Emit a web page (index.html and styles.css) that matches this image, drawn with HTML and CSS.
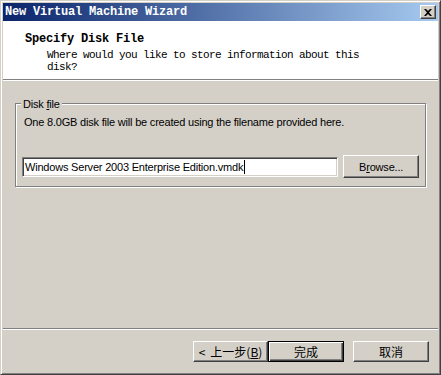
FILE: index.html
```html
<!DOCTYPE html>
<html lang="zh-CN">
  <head>
    <meta charset="UTF-8" />
    <meta name="viewport" content="width=device-width, initial-scale=1.0" />
    <title>New Virtual Machine Wizard</title>
    <link rel="stylesheet" href="styles.css">
  </head>
  <body>
    <div class="window">
      <div class="titlebar">
        <span class="title">New Virtual Machine Wizard</span>
        <button class="close" aria-label="Close">
          <svg width="8" height="7" viewBox="0 0 8 7">
            <path d="M0 0h2l2 2 2-2h2L5 3.5 8 7H6L4 5 2 7H0l3-3.5z" fill="#000" />
          </svg>
        </button>
      </div>

      <div class="header">
        <h1>Specify Disk File</h1>
        <p>Where would you like to store information about this<br />disk?</p>
      </div>

      <div class="content">
        <div class="group">
          <span class="legend">Disk <u>f</u>ile</span>
          <p class="info">One 8.0GB disk file will be created using the filename provided here.</p>
          <div class="file-row">
            <div class="textbox">Windows Server 2003 Enterprise Edition.vmdk<span class="caret"></span></div>
            <button class="btn browse">B<u>r</u>owse...</button>
          </div>
        </div>

        <div class="separator"></div>

        <div class="actions">
          <button class="btn back"><span class="arrow">&lt;</span>上一步(<u>B</u>)</button>
          <button class="btn default">完成</button>
          <button class="btn cancel">取消</button>
        </div>
      </div>
    </div>
  </body>
</html>
```

FILE: styles.css
```css
body {
  margin: 0;
  padding: 0;
  background-color: #d4d0c8;
  font-family: "Liberation Sans", Arial, sans-serif;
  font-size: 11px;
  color: #000;
}
.window {
  width: 441px;
  height: 375px;
  box-sizing: border-box;
  border: 1px solid;
  border-color: #d4d0c8 #404040 #404040 #d4d0c8;
  box-shadow: inset 1px 1px 0 #fff, inset -1px -1px 0 #808080;
  padding: 2px;
  display: flex;
  flex-direction: column;
  background-color: #d4d0c8;
}
.titlebar {
  height: 18px;
  flex: none;
  display: flex;
  align-items: center;
  justify-content: space-between;
  padding: 0 2px;
  background: linear-gradient(to right, #0a246a, #a6caf0);
}
.title {
  font-family: "Liberation Mono", monospace;
  font-weight: bold;
  font-size: 12px;
  letter-spacing: -0.2px;
  color: #fff;
}
.close {
  width: 16px;
  height: 14px;
  padding: 0;
  box-sizing: border-box;
  background-color: #d4d0c8;
  border: 1px solid;
  border-color: #fff #404040 #404040 #fff;
  box-shadow: inset -1px -1px 0 #808080;
  display: flex;
  align-items: center;
  justify-content: center;
}
.header {
  height: 59px;
  flex: none;
  background-color: #fff;
  border-bottom: 1px solid #808080;
  padding: 12px 0 0 22px;
  box-sizing: border-box;
}
.header h1 {
  margin: 0;
  font-family: "Liberation Mono", monospace;
  font-weight: bold;
  font-size: 12px;
  letter-spacing: -0.2px;
  line-height: 13px;
}
.header p {
  margin: 3px 0 0 22px;
  font-family: "Liberation Mono", monospace;
  font-size: 11px;
  letter-spacing: -0.6px;
  line-height: 12px;
}
.content {
  flex: 1;
  display: flex;
  flex-direction: column;
  border-top: 1px solid #fff;
}
.group {
  position: relative;
  margin: 22px 0 0 12px;
  width: 411px;
  height: 84px;
  box-sizing: border-box;
  border: 1px solid #808080;
  box-shadow: 1px 1px 0 #fff, inset 1px 1px 0 #fff;
  padding: 12px 6px 0 6px;
}
.legend {
  position: absolute;
  top: -6px;
  left: 5px;
  padding: 0 2px;
  line-height: 13px;
  letter-spacing: -0.2px;
  background-color: #d4d0c8;
}
.info {
  margin: 0 0 0 2px;
  line-height: 13px;
  letter-spacing: -0.2px;
}
.file-row {
  margin-top: 26px;
  display: flex;
  align-items: center;
  gap: 5px;
}
.textbox {
  width: 317px;
  height: 20px;
  box-sizing: border-box;
  background-color: #fff;
  border: 1px solid;
  border-color: #808080 #fff #fff #808080;
  box-shadow: inset 1px 1px 0 #404040, inset -1px -1px 0 #d4d0c8;
  padding: 0 2px;
  line-height: 18px;
  letter-spacing: -0.2px;
  white-space: nowrap;
}
.caret {
  display: inline-block;
  width: 1px;
  height: 14px;
  margin-left: 1px;
  vertical-align: -3px;
  background-color: #000;
}
.btn {
  font-family: "Liberation Sans", "Noto Sans CJK SC", sans-serif;
  font-size: 11px;
  color: #000;
  background-color: #d4d0c8;
  border: 1px solid;
  border-color: #fff #404040 #404040 #fff;
  box-shadow: inset -1px -1px 0 #808080;
  padding: 0;
  box-sizing: border-box;
}
.browse {
  width: 76px;
  height: 23px;
  letter-spacing: -0.2px;
}
.separator {
  margin-top: auto;
  border-top: 1px solid #808080;
  border-bottom: 1px solid #fff;
}
.actions {
  display: flex;
  justify-content: flex-end;
  padding: 11px 9px 10px 0;
}
.actions .btn {
  height: 21px;
  font-family: "Noto Sans CJK SC", sans-serif;
  font-size: 12px;
  line-height: 14px;
}
.back {
  width: 75px;
}
.back .arrow {
  margin-right: 5px;
}
.default {
  width: 76px;
  border-color: #000;
  box-shadow: inset 1px 1px 0 #fff, inset -1px -1px 0 #404040, inset -2px -2px 0 #808080;
}
.cancel {
  width: 76px;
  margin-left: 9px;
}
```
